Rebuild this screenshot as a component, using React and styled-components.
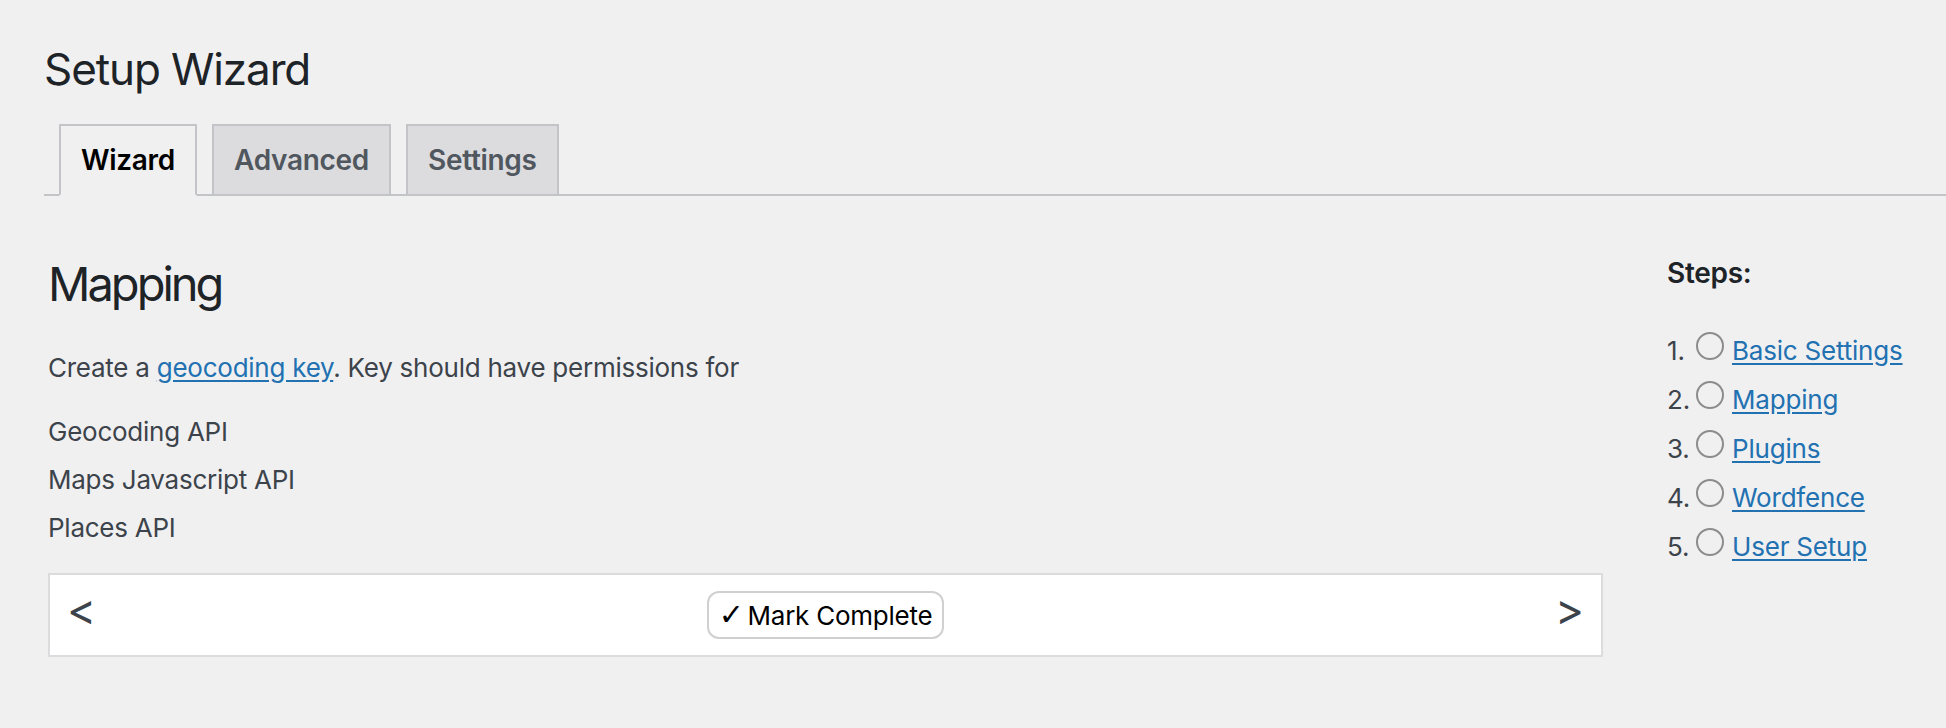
import React from "react";
import styled, { createGlobalStyle } from "styled-components";

const Global = createGlobalStyle`
  html, body { margin: 0; padding: 0; background: #f0f0f1; }
  body { font-family: Inter, "Noto Sans", sans-serif; color: #3c434a; }
  * { box-sizing: border-box; }
`;

const Wrap = styled.div`
  padding: 39px 0 40px 44px;
`;

const Title = styled.h1`
  margin: 0;
  font-size: 44px;
  line-height: 60px;
  font-weight: 400;
  letter-spacing: -1.1px;
  color: #1d2327;
`;

const TabBar = styled.nav`
  display: flex;
  margin-top: 25px;
  padding-left: 15px;
  border-bottom: 2px solid #c3c4c7;
`;

const Tab = styled.a`
  display: block;
  margin-right: 15px;
  margin-bottom: -2px;
  padding: 10px 20px;
  font-size: 28px;
  line-height: 48px;
  font-weight: 600;
  letter-spacing: -0.3px;
  text-decoration: none;
  border: 2px solid #c3c4c7;
  background: ${(p) => (p.$active ? "#f0f0f1" : "#dcdcde")};
  color: ${(p) => (p.$active ? "#000" : "#50575e")};
  border-bottom-color: ${(p) => (p.$active ? "#f0f0f1" : "#c3c4c7")};
`;

const Main = styled.div`
  display: flex;
  gap: 64px;
  padding-top: 57px;
  padding-right: 40px;
`;

const Content = styled.section`
  width: 1555px;
  margin-left: 4px;
  flex: none;
`;

const Heading = styled.h2`
  margin: 0;
  font-size: 47px;
  line-height: 62px;
  font-weight: 400;
  letter-spacing: -3px;
  color: #1d2327;
`;

const Para = styled.p`
  margin: 35px 0 0;
  font-size: 26px;
  line-height: 36px;
  letter-spacing: -0.25px;
`;

const Link = styled.a`
  color: #2271b1;
  text-decoration: underline;
  text-underline-offset: 3px;
`;

const ApiList = styled.ul`
  list-style: none;
  margin: 28px 0 0;
  padding: 0;
`;

const ApiItem = styled.li`
  font-size: 26px;
  line-height: 36px;
  letter-spacing: -0.25px;
  margin-bottom: 12px;
`;

const NavBox = styled.div`
  margin-top: 27px;
  height: 84px;
  display: flex;
  align-items: center;
  justify-content: space-between;
  padding: 0 17px;
  background: #fff;
  border: 2px solid #dcdcde;
`;

const Arrow = styled.button`
  border: 0;
  background: none;
  padding: 0 0 12px;
  font-family: inherit;
  font-size: 44px;
  line-height: 48px;
  color: #3c434a;
  cursor: pointer;
`;

const CompleteButton = styled.button`
  height: 48px;
  padding: 0 10px;
  font-family: inherit;
  font-size: 26px;
  letter-spacing: -0.25px;
  color: #000;
  background: #fff;
  border: 2px solid #d0d0d0;
  border-radius: 12px;
  cursor: pointer;
`;

const Check = styled.span`
  font-family: "DejaVu Sans", sans-serif;
  font-size: 30px;
  line-height: 1;
  margin-right: 4px;
`;

const Sidebar = styled.aside`
  flex: none;
`;

const StepsTitle = styled.h3`
  margin: 0;
  font-size: 28px;
  line-height: 40px;
  font-weight: 600;
  letter-spacing: -0.3px;
  color: #1d2327;
`;

const StepList = styled.ol`
  list-style: none;
  margin: 39px 0 0;
  padding: 0;
`;

const Step = styled.li`
  font-size: 26px;
  line-height: 36px;
  letter-spacing: -0.2px;
  margin-bottom: 12px;
  white-space: nowrap;
`;

const StepNum = styled.span`
  display: inline-block;
  width: 29px;
`;

const Circle = styled.span`
  display: inline-block;
  width: 28px;
  height: 28px;
  margin-right: 8px;
  border: 2px solid #8c8c8c;
  border-radius: 50%;
  vertical-align: baseline;
`;

const steps = ["Basic Settings", "Mapping", "Plugins", "Wordfence", "User Setup"];

export default function App() {
  return (
    <>
      <Global />
      <Wrap>
        <Title>Setup Wizard</Title>
        <TabBar>
          <Tab $active href="#">Wizard</Tab>
          <Tab href="#">Advanced</Tab>
          <Tab href="#">Settings</Tab>
        </TabBar>
        <Main>
          <Content>
            <Heading>Mapping</Heading>
            <Para>
              Create a <Link href="#">geocoding key</Link>. Key should have permissions for
            </Para>
            <ApiList>
              <ApiItem>Geocoding API</ApiItem>
              <ApiItem>Maps Javascript API</ApiItem>
              <ApiItem>Places API</ApiItem>
            </ApiList>
            <NavBox>
              <Arrow>&lt;</Arrow>
              <CompleteButton>
                <Check>✓</Check>Mark Complete
              </CompleteButton>
              <Arrow>&gt;</Arrow>
            </NavBox>
          </Content>
          <Sidebar>
            <StepsTitle>Steps:</StepsTitle>
            <StepList>
              {steps.map((s, i) => (
                <Step key={s}>
                  <StepNum>{i + 1}.</StepNum>
                  <Circle />
                  <Link href="#">{s}</Link>
                </Step>
              ))}
            </StepList>
          </Sidebar>
        </Main>
      </Wrap>
    </>
  );
}
